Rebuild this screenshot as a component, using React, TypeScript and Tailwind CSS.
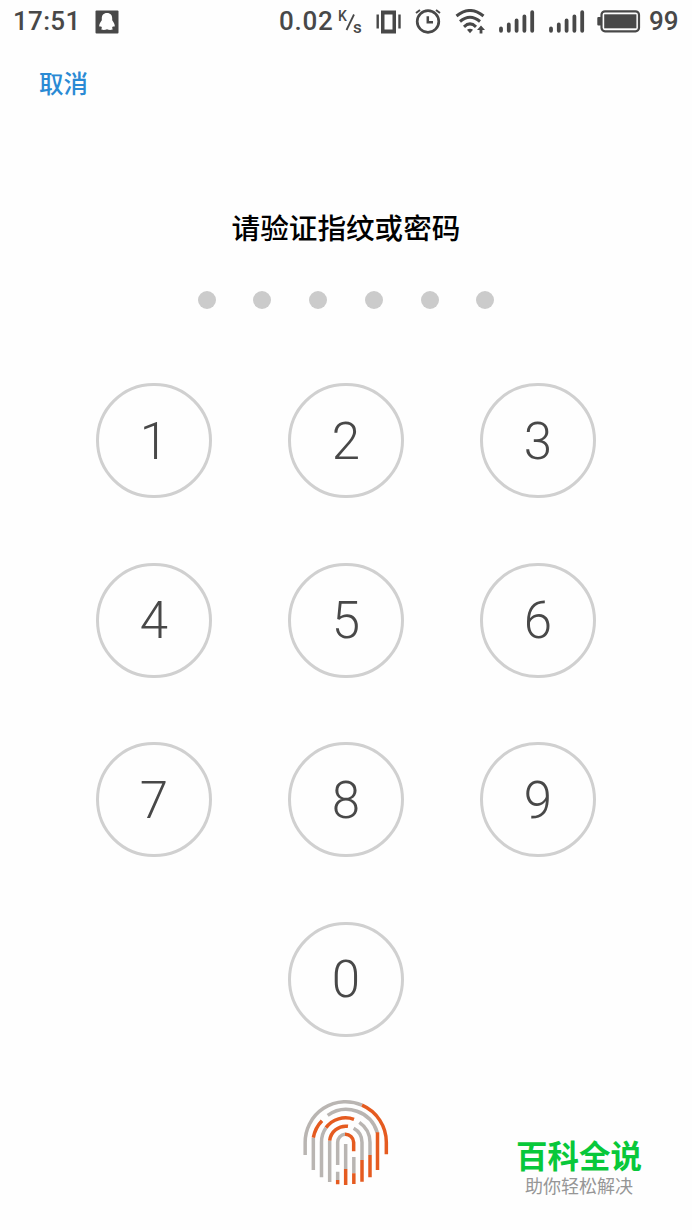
import { useState } from "react";

const rows = [["1", "2", "3"], ["4", "5", "6"], ["7", "8", "9"], ["0"]];

const cjk = "font-['Noto_Sans_CJK_SC',sans-serif]";

function Signal() {
  return (
    <svg width="36" height="24" viewBox="0 0 36 24" className="shrink-0">
      <g stroke="#484848" strokeWidth="3.8" strokeLinecap="round">
        <path d="M2 18.5V20.8M9.8 14.5V20.8M17.6 10.5V20.8M25.4 6.5V20.8M33.2 2.2V20.8" />
      </g>
    </svg>
  );
}

function StatusBar() {
  return (
    <div className="flex h-[43px] items-center font-[Roboto,sans-serif] text-[#484848]">
      <span className="ml-[13px] w-[82px] text-[26px] font-medium tracking-[0.3px]">17:51</span>
      <svg width="24" height="24" viewBox="0 0 24 24" className="shrink-0">
        <rect x="0.5" y="0.5" width="23" height="23" rx="1" fill="#484848" />
        <path
          d="M12 3C8.4 3 6.8 5.3 6.8 8.2v2C5.4 12.2 4.1 14 4.2 16.3c.6.5 1.4.1 2 .1.2.6.5 1.1.9 1.5-1 .6-1.1 1.4-.3 1.7 1.4.5 3.9.3 5.2-.4 1.3.7 3.8.9 5.2.4.8-.3.7-1.1-.3-1.7.4-.4.7-.9.9-1.5.6 0 1.4.4 2-.1.1-2.3-1.2-4.1-2.6-6.1v-2C17.2 5.3 15.6 3 12 3z"
          fill="#fff"
        />
      </svg>
      <span className="ml-[160px] w-[58px] text-[26px] font-medium tracking-[0.7px]">0.02</span>
      <span className="relative h-[24px] w-[39px] text-[14px] leading-none font-medium">
        <span className="absolute top-[-1px] left-[1px]">K</span>
        <span className="absolute top-[11px] left-[16px] text-[17px] leading-[12px]">s</span>
        <svg width="12" height="20" viewBox="0 0 12 20" className="absolute top-[3px] left-[8px]">
          <path d="M1.5 17L9 1.5" stroke="#484848" strokeWidth="1.8" />
        </svg>
      </span>
      <svg width="26" height="24" viewBox="0 0 26 24" className="shrink-0">
        <path d="M1.7 4.5V18.5M23.5 4.5V18.5" stroke="#484848" strokeWidth="2.4" />
        <path d="M5 .5h15v23H5zM8.5 4.5v15h8v-15z" fill="#484848" fillRule="evenodd" />
      </svg>
      <svg width="28" height="26" viewBox="0 0 28 26" className="ml-[12px] shrink-0" fill="none" stroke="#484848">
        <circle cx="14" cy="12.5" r="10.8" strokeWidth="2.7" />
        <path d="M13.8 7.2V13.3H19" strokeWidth="2.5" />
        <path d="M2 4L6 1M26 4L22 1" strokeWidth="2" />
      </svg>
      <svg width="32" height="26" viewBox="0 0 32 26" className="ml-[13px] shrink-0" fill="none" stroke="#484848" strokeWidth="3">
        <path d="M1.5 7Q15 -4 28.5 7M5 12.5Q15 4 25 12.5M9 17.8Q15 12 21 17.8" />
        <path d="M12 20.8Q15 18.8 18 20.8L15 24.2z" fill="#484848" stroke="none" />
        <path d="M26 16.5l4 4.5h-2.6v3.5h-2.8V21H22z" fill="#484848" stroke="none" />
      </svg>
      <div className="ml-[12px] flex gap-[14px]">
        <Signal />
        <Signal />
      </div>
      <svg width="44" height="24" viewBox="0 0 44 24" className="ml-[12px] shrink-0">
        <rect x="4.5" y="1.3" width="37.5" height="20" rx="3.5" fill="none" stroke="#484848" strokeWidth="2.2" />
        <rect x="7.2" y="4.3" width="32.2" height="14" fill="#484848" />
        <rect x="0.3" y="7" width="4" height="8.5" rx="1" fill="#484848" />
      </svg>
      <span className="ml-[8px] text-[26px] font-medium">99</span>
    </div>
  );
}

function Fingerprint() {
  return (
    <svg width="110" height="110" viewBox="0 0 330 330" fill="none" strokeWidth="10.5">
      <g stroke="#b9b5b2">
        <path d="M45.5 195V157A121.5 121.5 0 0 1 216 45.5" />
        <path d="M70 240V143M113 76A97 97 0 0 1 262 128" />
        <path d="M94.5 262V157A73 73 0 0 1 108 113M208 97A73 73 0 0 1 240 157V195" />
        <path d="M119 276V152M191 115A48.5 48.5 0 0 1 216 157V210" />
        <path d="M143 225V157A24 24 0 0 1 165 133" />
        <path d="M143 245V270M167 162V237M191.5 201V250" />
      </g>
      <g stroke="#e55b20">
        <path d="M216 45.5A121.5 121.5 0 0 1 289 157V193" />
        <path d="M96 92A97 97 0 0 0 70 143M262.5 127V240" />
        <path d="M108 113A73 73 0 0 1 192 88M240 195V262" />
        <path d="M119 152A48.5 48.5 0 0 1 174 109M216 210V275" />
        <path d="M165 133A25 25 0 0 1 191 157V184" />
        <path d="M143 270V283M167 237V285M191.5 250V282" />
      </g>
    </svg>
  );
}

export default function App() {
  const [code, setCode] = useState<string>("");

  const press = (digit: string) => {
    if (code.length < 6) setCode(code + digit);
  };

  return (
    <div className="flex h-[1230px] w-[692px] flex-col overflow-hidden bg-[#fefefe]">
      <StatusBar />
      <button
        className={`${cjk} mt-[22px] ml-[39px] h-[36px] self-start text-[24.5px] leading-[36px] font-medium text-[#2a8ad4]`}
        onClick={() => setCode("")}
      >
        取消
      </button>

      <h1 className={`${cjk} mt-[105px] h-[42px] text-center text-[28.6px] leading-[42px] font-medium text-black`}>
        请验证指纹或密码
      </h1>
      <div className="mt-[43px] flex justify-center gap-[37.8px]">
        {[0, 1, 2, 3, 4, 5].map((i) => (
          <span key={i} className={`size-[18px] rounded-full ${i < code.length ? "bg-[#484848]" : "bg-[#cbcbcb]"}`} />
        ))}
      </div>

      <div className="mt-[74px] flex flex-col gap-[64.5px]">
        {rows.map((row) => (
          <div key={row[0]} className="flex justify-center gap-[76px]">
            {row.map((digit) => (
              <button
                key={digit}
                onClick={() => press(digit)}
                className="flex h-[115px] w-[116px] items-center justify-center rounded-full border-[3px] border-[#d0d0d0] pt-px font-[Roboto,sans-serif] text-[51px] leading-none font-light text-[#484848]"
              >
                {digit}
              </button>
            ))}
          </div>
        ))}
      </div>

      <div className="mt-[53.5px] flex pl-[290px]">
        <Fingerprint />
        <div className={`${cjk} mt-[42px] ml-[101px] w-[156px] text-center`}>
          <p className="h-[44px] text-[31.5px] leading-[44px] font-bold whitespace-nowrap text-[#08c83a]">百科全说</p>
          <p className="-mt-[2px] h-[22px] text-[18px] leading-[22px] whitespace-nowrap text-[#969696]">助你轻松解决</p>
        </div>
      </div>
    </div>
  );
}
